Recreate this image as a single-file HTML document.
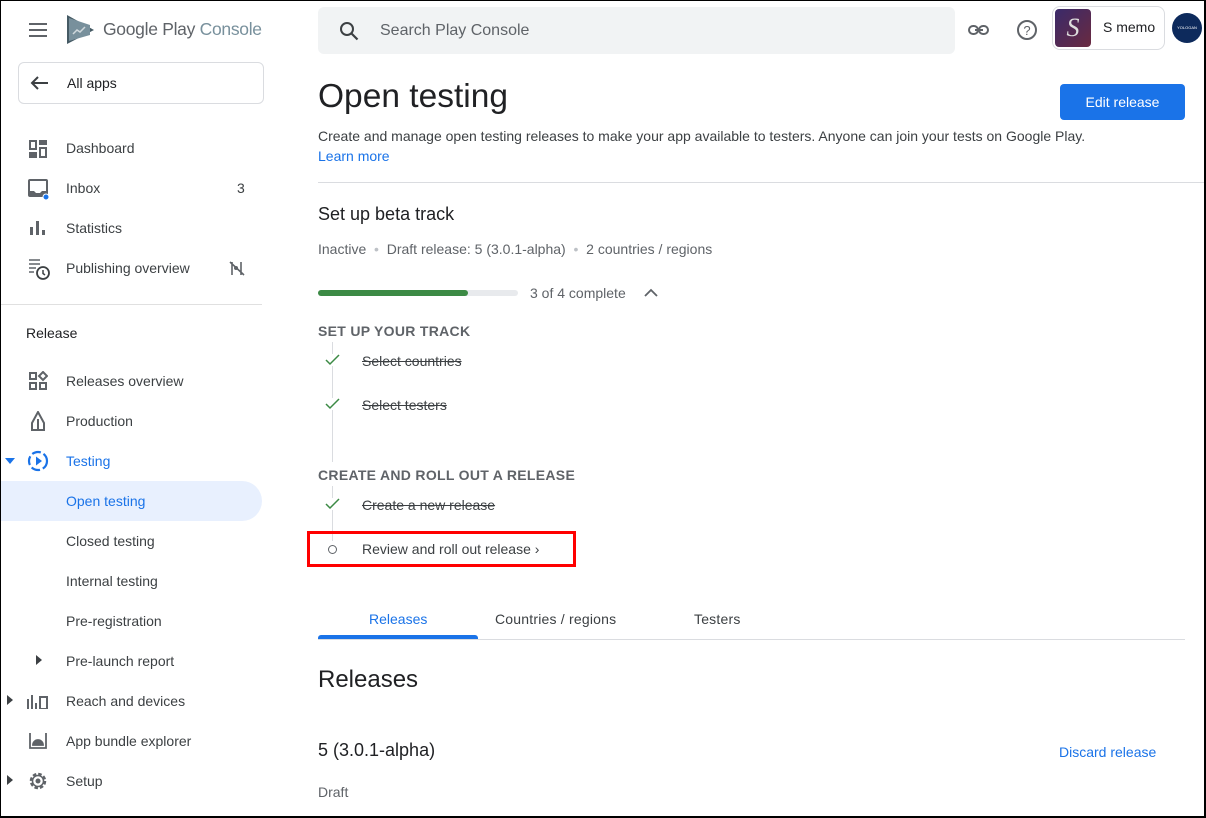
<!DOCTYPE html>
<html><head><meta charset="utf-8"><style>
*{box-sizing:border-box;margin:0;padding:0}
body{width:1206px;height:818px;overflow:hidden;background:#fff;font-family:"Liberation Sans",Arial,sans-serif;color:#202124;position:relative}
.frame{position:absolute;left:0;top:0;width:1206px;height:818px;border:1px solid #000;border-right:2px solid #000;border-bottom:2px solid #000;pointer-events:none;z-index:10}
.a{position:absolute;white-space:nowrap}
.nav{font-size:14px;color:#3c4043}
.ic{position:absolute}
.gr{color:#5f6368}
</style></head><body>
<div class="frame"></div>
<svg class="ic" style="left:28px;top:20px" width="20" height="20"><path d="M1 4h18M1 10h18M1 16h18" stroke="#5f6368" stroke-width="2"/></svg>
<svg class="ic" style="left:66px;top:14px" width="30" height="31"><path d="M1 1 L28 16 L1 30Z" fill="#455a64"/><path d="M3 4 L24 11 L24 21 L3 27Z" fill="#78909c"/><path d="M7 20l4-4 3 2 5-5" stroke="#cfd8dc" stroke-width="1.5" fill="none"/></svg>
<div class="a" style="left:103px;top:19px;font-size:17.5px;color:#5f6368;letter-spacing:-0.3px">Google Play <span style="color:#78909c">Console</span></div>
<div class="a" style="left:318px;top:7px;width:637px;height:47px;background:#f1f3f4;border-radius:6px"></div>
<svg class="ic" style="left:339px;top:21px" width="20" height="20"><circle cx="8" cy="8" r="6" stroke="#3c4043" stroke-width="2" fill="none"/><path d="M12.5 12.5l6 6" stroke="#3c4043" stroke-width="2.2"/></svg>
<div class="a" style="left:380px;top:22px;font-size:16px;color:#5f6368">Search Play Console</div>
<svg class="ic" style="left:968px;top:20px" width="22" height="20"><rect x="1" y="6" width="9" height="8" rx="4" stroke="#5f6368" stroke-width="2" fill="none"/><rect x="11" y="6" width="9" height="8" rx="4" stroke="#5f6368" stroke-width="2" fill="none"/><path d="M7 10h8" stroke="#5f6368" stroke-width="2"/></svg>
<svg class="ic" style="left:1016px;top:19px" width="22" height="22"><circle cx="11" cy="11" r="9" stroke="#5f6368" stroke-width="2" fill="none"/><text x="11" y="16" font-size="13" text-anchor="middle" fill="#5f6368" font-family="Liberation Sans">?</text></svg>
<div class="a" style="left:1052px;top:6px;width:113px;height:44px;border:1px solid #dadce0;border-radius:8px"></div>
<div class="a" style="left:1055px;top:9px;width:36px;height:38px;border-radius:4px;background:linear-gradient(135deg,#3a2a6a,#6a2a40)"><div style="color:#ddd;font:italic 26px 'Liberation Serif';text-align:center;line-height:38px">S</div></div>
<div class="a" style="left:1103px;top:19px;font-size:14px;color:#202124">S memo</div>
<div class="a" style="left:1172px;top:13px;width:30px;height:30px;border-radius:50%;background:#0d2a5c;color:#fff;font-size:4px;text-align:center;line-height:30px">YOLOGAN</div>
<div class="a" style="left:18px;top:62px;width:246px;height:42px;border:1px solid #dadce0;border-radius:6px"></div>
<svg class="ic" style="left:29px;top:75px" width="20" height="16"><path d="M19 8H3M9 2L3 8l6 6" stroke="#3c4043" stroke-width="2" fill="none"/></svg>
<div class="a nav" style="left:67px;top:75px;color:#202124">All apps</div>
<svg class="ic" style="left:28px;top:139px" width="20" height="20" fill="#5f6368"><rect x="1" y="1" width="8" height="10"/><rect x="11" y="1" width="8" height="5"/><rect x="11" y="8" width="8" height="11"/><rect x="1" y="13" width="8" height="6"/><rect x="3" y="3" width="4" height="6" fill="#fff"/><rect x="13" y="10" width="4" height="7" fill="#fff"/></svg>
<div class="a nav" style="left:66px;top:140px">Dashboard</div>
<svg class="ic" style="left:28px;top:179px" width="22" height="22"><rect x="1" y="1" width="18" height="16" rx="1" stroke="#5f6368" stroke-width="2" fill="none"/><path d="M1 12h5l2 2h4l2-2h5v5H1z" fill="#5f6368"/><circle cx="18" cy="18" r="3" fill="#1a73e8" stroke="#fff"/></svg>
<div class="a nav" style="left:66px;top:180px">Inbox</div>
<div class="a nav" style="left:237px;top:180px">3</div>
<svg class="ic" style="left:30px;top:221px" width="16" height="14" fill="#5f6368"><rect x="0" y="6" width="3" height="8"/><rect x="6" y="0" width="3" height="14"/><rect x="12" y="9" width="3" height="5"/></svg>
<div class="a nav" style="left:66px;top:220px">Statistics</div>
<svg class="ic" style="left:28px;top:258px" width="24" height="22"><path d="M1 2h11M1 6h11M1 10h7M1 14h5" stroke="#5f6368" stroke-width="1.6"/><circle cx="15" cy="15" r="6" stroke="#3c4043" stroke-width="1.8" fill="none"/><path d="M15 12v3.5l2 1.5" stroke="#3c4043" stroke-width="1.5" fill="none"/></svg>
<div class="a nav" style="left:66px;top:260px">Publishing overview</div>
<svg class="ic" style="left:229px;top:261px" width="16" height="15"><path d="M3 1v13M12 1v13M1 1l14 13" stroke="#5f6368" stroke-width="1.6"/><circle cx="7" cy="7" r="2" fill="#5f6368"/></svg>
<div class="a" style="left:0;top:304px;width:262px;height:1px;background:#e0e0e0"></div>
<div class="a" style="left:26px;top:325px;font-size:14px;color:#202124">Release</div>
<svg class="ic" style="left:28px;top:371px" width="20" height="20" fill="none" stroke="#5f6368" stroke-width="2"><rect x="2" y="2" width="6" height="6"/><rect x="2" y="12" width="6" height="6"/><rect x="12" y="12" width="6" height="6"/><path d="M15 1l4 4-4 4-4-4z"/></svg>
<div class="a nav" style="left:66px;top:373px">Releases overview</div>
<svg class="ic" style="left:29px;top:411px" width="18" height="20" fill="none" stroke="#5f6368" stroke-width="2"><path d="M9 1L3 12v7h12v-7z"/><path d="M9 8v11"/></svg>
<div class="a nav" style="left:66px;top:413px">Production</div>
<svg class="ic" style="left:5px;top:458px" width="10" height="6"><path d="M0 0h10L5 6z" fill="#1a73e8"/></svg>
<svg class="ic" style="left:27px;top:450px" width="22" height="22"><circle cx="11" cy="11" r="9" stroke="#1a73e8" stroke-width="2.2" fill="none" stroke-dasharray="9 3"/><path d="M9 6.5v9l6-4.5z" fill="#1a73e8"/></svg>
<div class="a nav" style="left:66px;top:453px;color:#1a73e8">Testing</div>
<div class="a" style="left:0;top:481px;width:262px;height:40px;background:#e8f0fe;border-radius:0 20px 20px 0"></div>
<div class="a nav" style="left:66px;top:493px;color:#1a73e8">Open testing</div>
<div class="a nav" style="left:66px;top:533px">Closed testing</div>
<div class="a nav" style="left:66px;top:573px">Internal testing</div>
<div class="a nav" style="left:66px;top:613px">Pre-registration</div>
<svg class="ic" style="left:36px;top:655px" width="6" height="10"><path d="M0 0l6 5-6 5z" fill="#3c4043"/></svg>
<div class="a nav" style="left:66px;top:653px">Pre-launch report</div>
<svg class="ic" style="left:7px;top:695px" width="6" height="10"><path d="M0 0l6 5-6 5z" fill="#3c4043"/></svg>
<svg class="ic" style="left:27px;top:693px" width="22" height="16" fill="#5f6368"><rect x="0" y="6" width="2" height="10"/><rect x="4" y="2" width="2" height="14"/><rect x="8" y="10" width="2" height="6"/><rect x="13" y="4" width="7" height="12" fill="none" stroke="#5f6368" stroke-width="2"/></svg>
<div class="a nav" style="left:66px;top:693px">Reach and devices</div>
<svg class="ic" style="left:27px;top:732px" width="22" height="18" fill="none" stroke="#5f6368" stroke-width="1.8"><path d="M3 1v15h16V1"/><path d="M6 13a5 5 0 0 1 10 0z" fill="#5f6368"/></svg>
<div class="a nav" style="left:66px;top:733px">App bundle explorer</div>
<svg class="ic" style="left:7px;top:775px" width="6" height="10"><path d="M0 0l6 5-6 5z" fill="#3c4043"/></svg>
<svg class="ic" style="left:27px;top:770px" width="22" height="22"><circle cx="11" cy="11" r="7" stroke="#5f6368" stroke-width="2.5" fill="none" stroke-dasharray="3.5 2"/><circle cx="11" cy="11" r="5.5" stroke="#5f6368" stroke-width="1.5" fill="none"/><circle cx="11" cy="11" r="2.5" fill="#5f6368"/></svg>
<div class="a nav" style="left:66px;top:773px">Setup</div>
<div class="a" style="left:318px;top:78px;font-size:33.5px;color:#202124">Open testing</div>
<div class="a" style="left:1060px;top:84px;width:125px;height:36px;background:#1a73e8;border-radius:4px;color:#fff;font-size:14px;text-align:center;line-height:36px">Edit release</div>
<div class="a" style="left:318px;top:128px;font-size:14px;color:#3c4043">Create and manage open testing releases to make your app available to testers. Anyone can join your tests on Google Play.</div>
<div class="a" style="left:318px;top:148px;font-size:14px;color:#1a73e8">Learn more</div>
<div class="a" style="left:318px;top:182px;width:888px;height:1px;background:#dadce0"></div>
<div class="a" style="left:318px;top:204px;font-size:18px;color:#202124">Set up beta track</div>
<div class="a gr" style="left:318px;top:241px;font-size:14px">Inactive <span style="color:#bdc1c6">&nbsp;•&nbsp;</span> Draft release: 5 (3.0.1-alpha) <span style="color:#bdc1c6">&nbsp;•&nbsp;</span> 2 countries / regions</div>
<div class="a" style="left:318px;top:290px;width:200px;height:6px;background:#e8eaed;border-radius:3px"></div>
<div class="a" style="left:318px;top:290px;width:150px;height:6px;background:#3c8a45;border-radius:3px"></div>
<div class="a gr" style="left:530px;top:285px;font-size:14px">3 of 4 complete</div>
<svg class="ic" style="left:644px;top:288px" width="14" height="9"><path d="M1 8l6-6 6 6" stroke="#5f6368" stroke-width="1.8" fill="none"/></svg>
<div class="a gr" style="left:318px;top:323px;font-size:14px;font-weight:bold;letter-spacing:0.3px">SET UP YOUR TRACK</div>
<div class="a" style="left:332px;top:342px;width:1px;height:120px;background:#dadce0"></div>
<div class="a gr" style="left:318px;top:467px;font-size:14px;font-weight:bold;letter-spacing:0.3px">CREATE AND ROLL OUT A RELEASE</div>
<div class="a" style="left:332px;top:486px;width:1px;height:55px;background:#dadce0"></div>
<svg class="ic" style="left:325px;top:354px" width="15" height="12"><rect width="15" height="12" fill="#fff"/><path d="M1 6l4 4 9-9" stroke="#3c8a45" stroke-width="1.5" fill="none"/></svg>
<div class="a" style="left:362px;top:353px;font-size:14px;color:#3c4043;text-decoration:line-through">Select countries</div>
<svg class="ic" style="left:325px;top:398px" width="15" height="12"><rect width="15" height="12" fill="#fff"/><path d="M1 6l4 4 9-9" stroke="#3c8a45" stroke-width="1.5" fill="none"/></svg>
<div class="a" style="left:362px;top:397px;font-size:14px;color:#3c4043;text-decoration:line-through">Select testers</div>
<svg class="ic" style="left:325px;top:498px" width="15" height="12"><rect width="15" height="12" fill="#fff"/><path d="M1 6l4 4 9-9" stroke="#3c8a45" stroke-width="1.5" fill="none"/></svg>
<div class="a" style="left:362px;top:497px;font-size:14px;color:#3c4043;text-decoration:line-through">Create a new release</div>
<div class="a" style="left:328px;top:545px;width:9px;height:9px;border:1.5px solid #5f6368;border-radius:50%;background:#fff"></div>
<div class="a" style="left:362px;top:541px;font-size:14px;color:#3c4043">Review and roll out release ›</div>
<div class="a" style="left:307px;top:531px;width:269px;height:36px;border:3px solid #f00"></div>
<div class="a" style="left:369px;top:611px;font-size:14px;color:#1a73e8">Releases</div>
<div class="a" style="left:495px;top:611px;font-size:14px;color:#3c4043;letter-spacing:0.2px">Countries / regions</div>
<div class="a" style="left:694px;top:611px;font-size:14px;color:#3c4043;letter-spacing:0.2px">Testers</div>
<div class="a" style="left:318px;top:639px;width:867px;height:1px;background:#dadce0"></div>
<div class="a" style="left:318px;top:635px;width:160px;height:4px;background:#1a73e8;border-radius:3px 3px 0 0"></div>
<div class="a" style="left:318px;top:666px;font-size:24px;color:#202124">Releases</div>
<div class="a" style="left:318px;top:740px;font-size:18px;color:#202124">5 (3.0.1-alpha)</div>
<div class="a" style="left:1059px;top:744px;font-size:14px;color:#1a73e8">Discard release</div>
<div class="a gr" style="left:318px;top:784px;font-size:14px">Draft</div>
</body></html>
